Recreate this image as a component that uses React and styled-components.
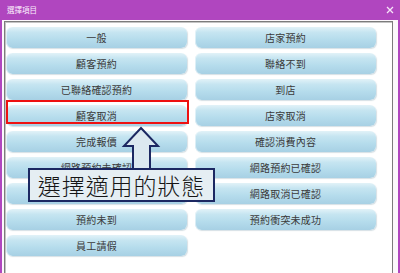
import React from "react";
import styled, { createGlobalStyle } from "styled-components";

const Global = createGlobalStyle`
  html, body { margin: 0; padding: 0; background: #ffffff; }
  body { font-family: "Noto Sans CJK TC", "Noto Sans", sans-serif; }
`;

const PURPLE = "#b046bf";

const Window = styled.div`
  position: relative;
  width: 400px;
  height: 273px;
  overflow: hidden;
  background: #ffffff;
  display: flex;
  flex-direction: column;
`;

const TitleBar = styled.div`
  height: 20px;
  flex: none;
  background: ${PURPLE};
  display: flex;
  align-items: center;
  justify-content: space-between;
  padding: 0 6px 0 7px;
`;

const Title = styled.span`
  color: #fbeefc;
  font-size: 7.5px;
  line-height: 1;
  letter-spacing: 0;
`;

const Close = styled.button`
  border: 0;
  background: transparent;
  padding: 0;
  width: 8px;
  height: 8px;
  display: flex;
  cursor: pointer;
`;

const Body = styled.div`
  flex: 1;
  display: flex;
  border-left: 2px solid ${PURPLE};
  border-right: 2px solid ${PURPLE};
  padding: 1px 5px 0 2px;
  background: #fcf8fc;
`;

const Panel = styled.div`
  flex: 1;
  background: #ffffff;
  border: 1px solid #7c7c7c;
  border-bottom: 0;
  box-shadow: inset 1px 1px 0 #c4c4c4;
  padding: 1px 0 0 1px;
`;

const Grid = styled.div`
  display: grid;
  grid-template-columns: 181px 181px;
  grid-auto-rows: 21px;
  column-gap: 8px;
  row-gap: 5px;
`;

const Cell = styled.div`
  position: relative;
`;

const Option = styled.button`
  width: 100%;
  height: 100%;
  border: 0;
  border-radius: 6px;
  padding: 0;
  background: linear-gradient(
    to bottom,
    #e2f2f8 0%,
    #c6e5f1 25%,
    #b5dcec 60%,
    #a7d0e4 100%
  );
  box-shadow: inset 1px 0 0 rgba(255, 255, 255, 0.5), 1px 1px 1px rgba(90, 130, 150, 0.25);
  color: #3a3a3a;
  font-family: "Noto Sans CJK TC", "Noto Sans", sans-serif;
  font-size: 10px;
  letter-spacing: 0.2px;
  line-height: 21px;
  text-align: center;
  cursor: pointer;
`;

const Highlight = styled.div`
  position: absolute;
  left: 0;
  right: -2px;
  top: -1px;
  bottom: -2px;
  border: 2px solid #ee1111;
  pointer-events: none;
`;

const Arrow = styled.svg`
  position: absolute;
  left: 120px;
  top: 125px;
  width: 42px;
  height: 48px;
  overflow: visible;
`;

const Callout = styled.div`
  position: absolute;
  left: 28px;
  top: 168px;
  width: 187px;
  height: 34px;
  box-sizing: border-box;
  border: 2px solid #1c2862;
  background: #e5eef3;
  color: #151515;
  font-family: "Noto Sans CJK TC", "Noto Sans", sans-serif;
  font-size: 23px;
  font-weight: 300;
  letter-spacing: 0.9px;
  line-height: 30px;
  text-align: center;
  white-space: nowrap;
`;

const items = [
  ["一般", "店家預約"],
  ["顧客預約", "聯絡不到"],
  ["已聯絡確認預約", "到店"],
  ["顧客取消", "店家取消"],
  ["完成報價", "確認消費內容"],
  ["網路預約未確認", "網路預約已確認"],
  ["網路取消未確認", "網路取消已確認"],
  ["預約未到", "預約衝突未成功"],
  ["員工請假", null],
];

export default function App() {
  return (
    <>
      <Global />
      <Window>
        <TitleBar>
          <Title>選擇項目</Title>
          <Close aria-label="close">
            <svg width="8" height="8" viewBox="0 0 8 8">
              <path d="M1 1 L7 7 M7 1 L1 7" stroke="#f6e4f8" strokeWidth="1.3" />
            </svg>
          </Close>
        </TitleBar>
        <Body>
          <Panel>
            <Grid>
              {items.flat().map((label, i) =>
                label ? (
                  <Cell key={i}>
                    <Option>{label}</Option>
                    {label === "顧客取消" && <Highlight />}
                  </Cell>
                ) : (
                  <Cell key={i} />
                )
              )}
            </Grid>
          </Panel>
        </Body>
        <Arrow viewBox="0 0 42 48">
          <polygon
            points="21,3 38,21 30,21 30,46 13,46 13,21 4,21"
            fill="#dce9f0"
            stroke="#1c2862"
            strokeWidth="2"
            strokeLinejoin="miter"
          />
        </Arrow>
        <Callout>選擇適用的狀態</Callout>
      </Window>
    </>
  );
}
